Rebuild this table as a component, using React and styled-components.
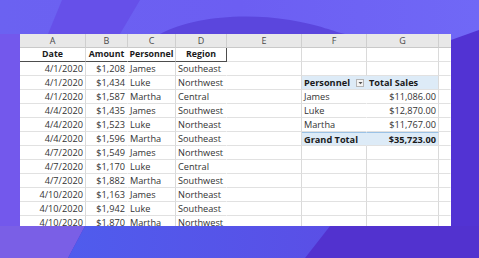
import styled, { createGlobalStyle } from 'styled-components';

const GlobalStyle = createGlobalStyle`
  html, body {
    margin: 0;
    padding: 0;
    width: 479px;
    height: 258px;
    overflow: hidden;
    background: #6a5cef;
  }
`;

const COLS = [66, 42, 48, 51, 75, 65, 72, 12];
const LETTERS = ['A', 'B', 'C', 'D', 'E', 'F', 'G', ''];

const data = [
  ['4/1/2020', '$1,208', 'James', 'Southeast'],
  ['4/1/2020', '$1,434', 'Luke', 'Northwest'],
  ['4/1/2020', '$1,587', 'Martha', 'Central'],
  ['4/4/2020', '$1,435', 'James', 'Southwest'],
  ['4/4/2020', '$1,523', 'Luke', 'Northeast'],
  ['4/4/2020', '$1,596', 'Martha', 'Southeast'],
  ['4/7/2020', '$1,549', 'James', 'Northwest'],
  ['4/7/2020', '$1,170', 'Luke', 'Central'],
  ['4/7/2020', '$1,882', 'Martha', 'Southwest'],
  ['4/10/2020', '$1,163', 'James', 'Northeast'],
  ['4/10/2020', '$1,942', 'Luke', 'Southeast'],
  ['4/10/2020', '$1,870', 'Martha', 'Northwest'],
];

// pivot lives in F:G, its header sits on the 2nd data row
const pivot = {
  2: { f: 'Personnel', g: 'Total Sales', kind: 'head' },
  3: { f: 'James', g: '$11,086.00' },
  4: { f: 'Luke', g: '$12,870.00' },
  5: { f: 'Martha', g: '$11,767.00' },
  6: { f: 'Grand Total', g: '$35,723.00', kind: 'total' },
};

const gridCols = [0, 2, 4, 5, 6];

function Backdrop() {
  return (
    <Decor viewBox="0 0 479 258" preserveAspectRatio="none">
      <defs>
        <linearGradient id="topg" x1="0" y1="0" x2="1" y2="0">
          <stop offset="0" stopColor="#6b62f1" />
          <stop offset="0.5" stopColor="#6c5ef2" />
          <stop offset="1" stopColor="#7068f6" />
        </linearGradient>
        <linearGradient id="botblue" x1="0" y1="0" x2="1" y2="0">
          <stop offset="0" stopColor="#4f5ced" />
          <stop offset="1" stopColor="#5a4fe6" />
        </linearGradient>
      </defs>
      <rect x="0" y="0" width="479" height="258" fill="url(#topg)" />
      <path d="M62 0 L140 0 L120 34 L48 34 Z" fill="#6650e9" />
      <path d="M160 34 C190 18 240 12 290 20 C320 25 335 32 345 34 Z" fill="#5b46dd" />
      <path d="M0 34 L20 34 L20 258 L0 258 Z" fill="#7358ec" />
      <path d="M451 40 L479 30 L479 258 L451 258 Z" fill="#5233d3" />
      <path d="M0 226 L479 226 L479 258 L0 258 Z" fill="#5232cf" />
      <path d="M0 226 L85 226 L68 258 L0 258 Z" fill="#7a5fe6" />
      <path d="M85 226 L330 226 L305 258 L68 258 Z" fill="url(#botblue)" />
    </Decor>
  );
}

function DropButton() {
  return (
    <Drop>
      <svg width="5" height="4" viewBox="0 0 5 4">
        <path d="M0.5 1 L4.5 1 L2.5 3.2 Z" fill="#555" />
      </svg>
    </Drop>
  );
}

export default function App() {
  const rows = [
    ['Date', 'Amount', 'Personnel', 'Region'],
    ...data,
  ];

  return (
    <>
      <GlobalStyle />
      <Page>
        <Backdrop />
        <Sheet>
          {LETTERS.map((l, i) => (
            <ColHead key={l + i} $last={i === LETTERS.length - 1}>{l}</ColHead>
          ))}

          {rows.map((r, ri) => {
            const isHead = ri === 0;
            const p = pivot[ri];
            return COLS.map((_, ci) => {
              let text = r[ci] || '';
              let align = 'left';
              let bold = isHead;
              let bg = 'transparent';
              let line = gridCols.includes(ci);
              let topLine = false;
              let drop = false;

              if (isHead) {
                align = 'center';
              } else if (ci === 0 || ci === 1) {
                align = 'right';
              }

              if (p && (ci === 5 || ci === 6)) {
                text = ci === 5 ? p.f : p.g;
                align = ci === 6 && p.kind !== 'head' ? 'right' : 'left';
                bold = p.kind === 'head' || p.kind === 'total';
                if (bold) bg = '#ddebf7';
                if (ci === 5) line = false;
                topLine = p.kind === 'total';
                drop = p.kind === 'head' && ci === 5;
              }

              return (
                <Cell
                  key={ri + '-' + ci}
                  $align={align}
                  $bold={bold}
                  $bg={bg}
                  $line={line}
                  $topLine={topLine}
                  $headRow={isHead && ci < 4}
                  $edge={isHead && ci === 3}
                  $small={isHead}
                >
                  <CellText>{text}</CellText>
                  {drop && <DropButton />}
                </Cell>
              );
            });
          })}
        </Sheet>
      </Page>
    </>
  );
}

const Page = styled.div`
  position: relative;
  width: 479px;
  height: 258px;
  box-sizing: border-box;
  padding: 34px 28px 0 20px;
  overflow: hidden;
`;

const Decor = styled.svg`
  position: absolute;
  inset: 0;
  width: 479px;
  height: 258px;
  z-index: 0;
`;

const Sheet = styled.div`
  position: relative;
  z-index: 1;
  width: 431px;
  height: 192px;
  overflow: hidden;
  background: #ffffff;
  display: grid;
  grid-template-columns: ${COLS.map((c) => c + 'px').join(' ')};
  grid-auto-rows: 14px;
  font-family: "Open Sans", "Liberation Sans", sans-serif;
  font-size: 9.2px;
  color: #262626;
`;

const ColHead = styled.div`
  background: #e8e8e8;
  color: #4a4a4a;
  font-size: 9px;
  display: flex;
  align-items: center;
  justify-content: center;
  box-sizing: border-box;
  border-bottom: 1px solid #c9c9c9;
  border-right: ${({ $last }) => ($last ? 'none' : '1px solid #cfcfcf')};
`;

const Cell = styled.div`
  box-sizing: border-box;
  display: flex;
  align-items: center;
  justify-content: ${({ $align }) =>
    $align === 'right' ? 'flex-end' : $align === 'center' ? 'center' : 'space-between'};
  padding: 0 2px;
  white-space: nowrap;
  overflow: visible;
  font-size: ${({ $small }) => ($small ? '8.8px' : '9.2px')};
  font-weight: ${({ $bold }) => ($bold ? 700 : 400)};
  background: ${({ $bg }) => $bg};
  border-bottom: ${({ $headRow }) => ($headRow ? '1px solid #4d4d4d' : '1px solid #e1e1e1')};
  border-right: ${({ $line, $edge }) =>
    $edge ? '1px solid #4d4d4d' : $line ? '1px solid #dadada' : '1px solid transparent'};
  border-top: ${({ $topLine }) => ($topLine ? '1px solid #9bc2e6' : 'none')};
  color: ${({ $bold }) => ($bold ? '#1a1a1a' : '#333')};
`;

const CellText = styled.span`
  line-height: 13px;
`;

const Drop = styled.span`
  width: 8px;
  height: 8px;
  box-sizing: border-box;
  border: 1px solid #b5b5b5;
  background: #f4f4f4;
  display: flex;
  align-items: center;
  justify-content: center;
`;
